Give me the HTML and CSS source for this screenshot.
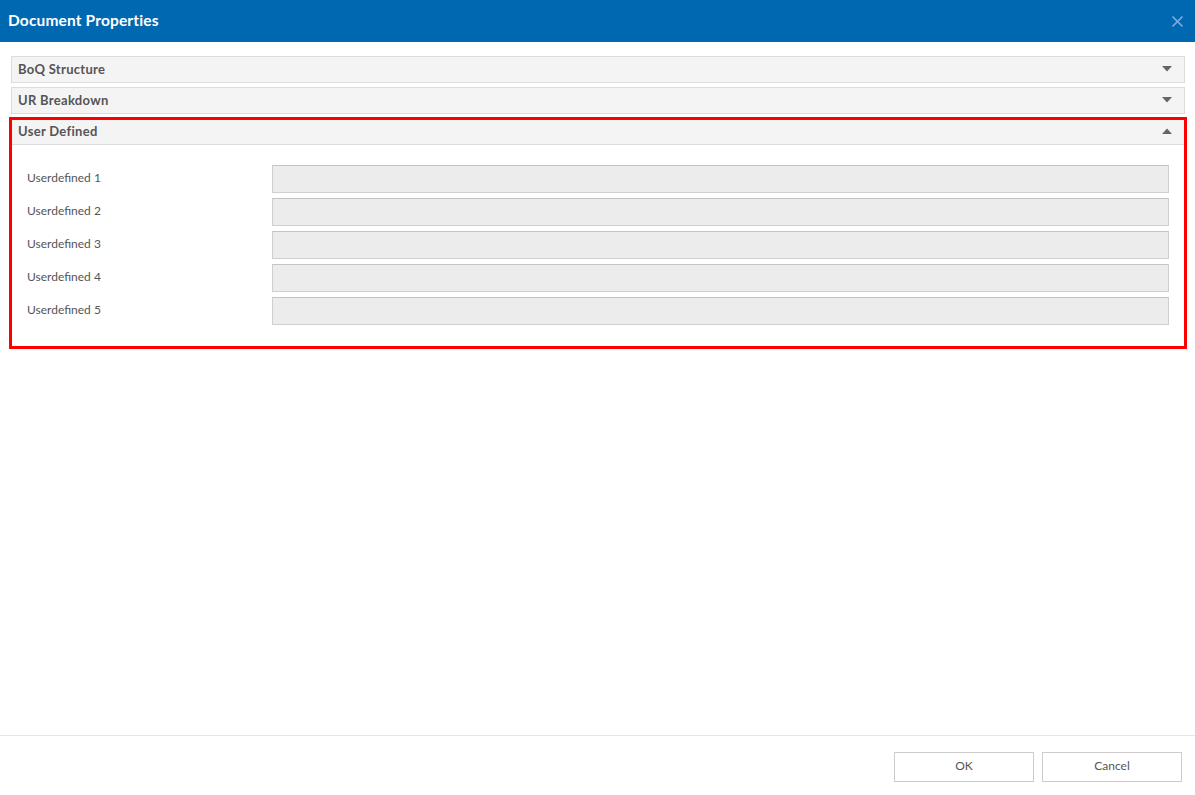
FILE: index.html
```html
<!DOCTYPE html>
<html lang="en">
<head>
<meta charset="utf-8">
<title>Document Properties</title>
<link rel="stylesheet" href="styles.css">
</head>
<body>
<div class="dialog">
  <header class="titlebar">
    <h1 class="title">Document Properties</h1>
    <button class="close" aria-label="Close">
      <svg width="11" height="11" viewBox="0 0 11 11"><path d="M0.5 0.5 L10.5 10.5 M10.5 0.5 L0.5 10.5" stroke="#7aa9d8" stroke-width="1.6" fill="none"/></svg>
    </button>
  </header>
  <main class="content">
    <section class="section">
      <div class="section-head">
        <span class="section-title">BoQ Structure</span>
        <svg class="caret" width="10" height="6" viewBox="0 0 10 6"><path d="M0 0 H10 L5 5.5 Z" fill="#666"/></svg>
      </div>
    </section>
    <section class="section section-second">
      <div class="section-head">
        <span class="section-title">UR Breakdown</span>
        <svg class="caret" width="10" height="6" viewBox="0 0 10 6"><path d="M0 0 H10 L5 5.5 Z" fill="#666"/></svg>
      </div>
    </section>
    <section class="section highlight">
      <div class="section-head open">
        <span class="section-title">User Defined</span>
        <svg class="caret" width="10" height="6" viewBox="0 0 10 6"><path d="M0 6 H10 L5 0.5 Z" fill="#666"/></svg>
      </div>
      <div class="section-body">
        <label class="field-label">Userdefined 1</label><input class="field" type="text">
        <label class="field-label">Userdefined 2</label><input class="field" type="text">
        <label class="field-label">Userdefined 3</label><input class="field" type="text">
        <label class="field-label">Userdefined 4</label><input class="field" type="text">
        <label class="field-label">Userdefined 5</label><input class="field" type="text">
      </div>
    </section>
  </main>
  <footer class="footer">
    <button class="btn">OK</button>
    <button class="btn">Cancel</button>
  </footer>
</div>
</body>
</html>
```
FILE: styles.css
```css
* { box-sizing: border-box; }
html, body { margin: 0; padding: 0; background: #fff; }
body { font-family: "Source Sans Pro", Lato, "Liberation Sans", sans-serif; color: #555; }

.dialog {
  width: 1195px;
  height: 795px;
  display: flex;
  flex-direction: column;
  background: #fff;
}

.titlebar {
  height: 42px;
  background: #0067b1;
  display: flex;
  align-items: center;
  justify-content: space-between;
  padding: 0 12px 2px 8px;
  flex: none;
}
.title {
  margin: 0;
  font-size: 15.5px;
  font-weight: 700;
  color: #fff;
  letter-spacing: 0.15px;
}
.close {
  background: none;
  border: 0;
  padding: 0;
  width: 11px;
  height: 11px;
  display: flex;
  margin-top: 3px;
}

.content {
  flex: 1;
  padding: 14px 10px 0 11px;
}

.section {
  border: 1px solid #dcdcdc;
  background: #f4f4f4;
  margin-bottom: 4px;
}
.section-second { margin-bottom: 5px; }

.section-head {
  height: 25px;
  display: flex;
  align-items: center;
  justify-content: space-between;
  padding: 0 12px 1px 6px;
}
.section-head.open { border-bottom: 1px solid #dcdcdc; height: 25px; padding-bottom: 2px; }
.section-title {
  font-size: 13px;
  font-weight: 700;
  color: #555;
  letter-spacing: 0.3px;
}
.caret { display: block; }

.highlight {
  outline: 3px solid #ff0000;
  outline-offset: -1px;
}

.section-body {
  background: #fff;
  padding: 20px 15px 21px 15px;
  display: grid;
  grid-template-columns: 245px 1fr;
  row-gap: 5px;
  align-items: center;
}
.field-label {
  font-size: 12px;
  color: #555;
  padding-bottom: 4px;
}
.field {
  height: 28px;
  border: 1px solid #cfcfcf;
  border-top-color: #c4c4c4;
  background: #ececec;
  margin: 0;
  padding: 0 6px;
  font: inherit;
}

.footer {
  flex: none;
  height: 60px;
  border-top: 1px solid #e6e6e6;
  display: flex;
  justify-content: flex-end;
  align-items: flex-start;
  gap: 8px;
  padding: 16px 13px 0 0;
}
.btn {
  width: 140px;
  height: 30px;
  background: #fff;
  border: 1px solid #cccccc;
  font-family: inherit;
  font-size: 12px;
  color: #555;
  padding: 0 0 3px 0;
}
```
